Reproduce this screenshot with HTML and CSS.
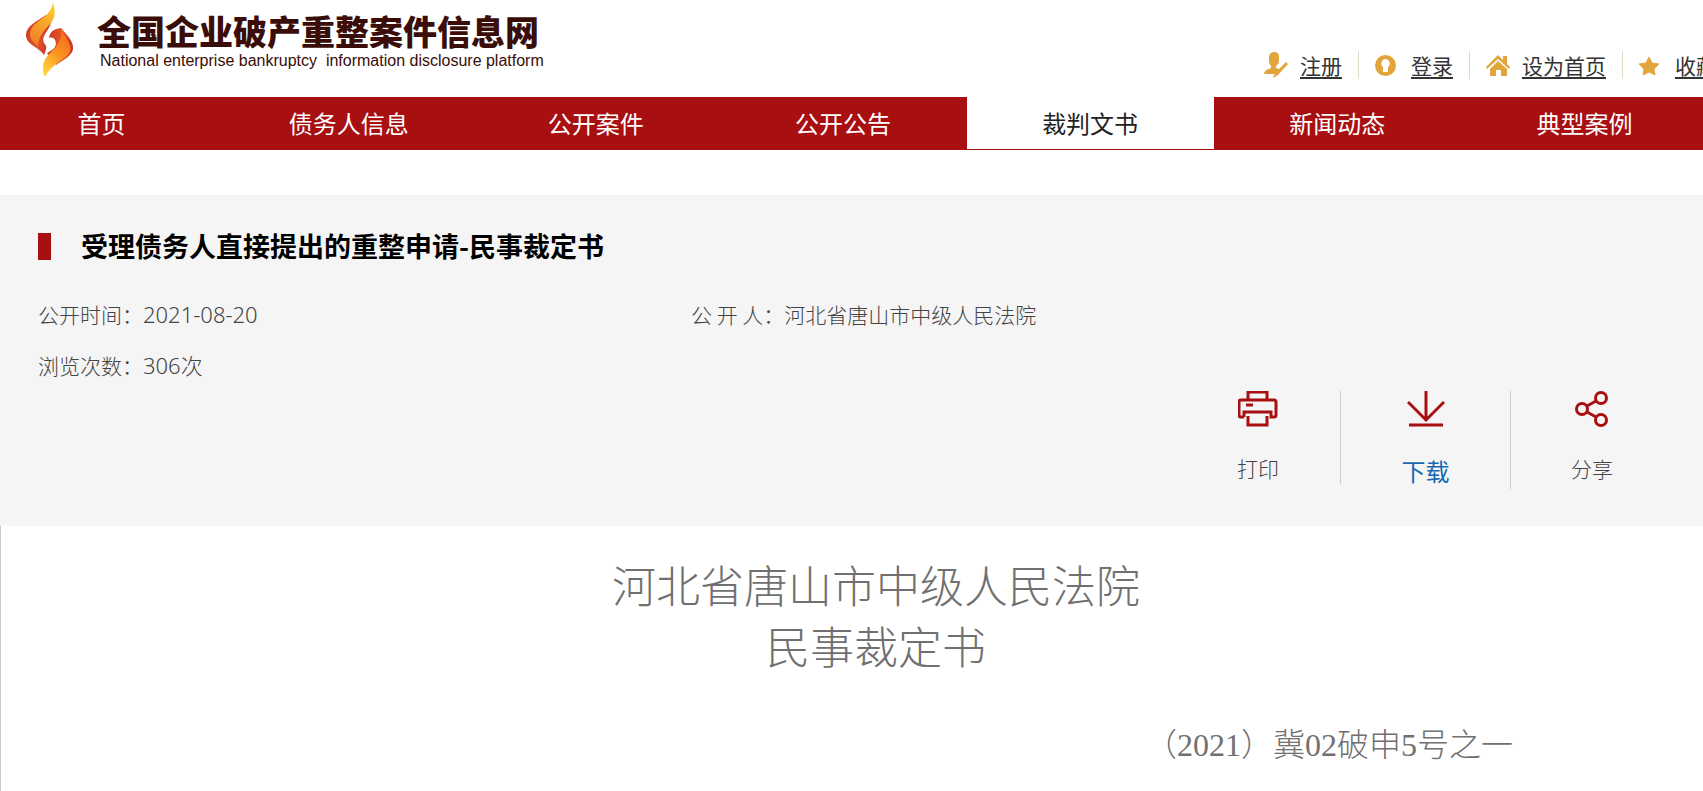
FILE: index.html
```html
<!DOCTYPE html>
<html lang="zh-CN">
<head>
<meta charset="utf-8">
<title>全国企业破产重整案件信息网</title>
<link rel="stylesheet" href="styles.css">
</head>
<body>
<header class="header">
  <a class="logo" href="#">
    <svg class="logo-mark" viewBox="0 0 48 74" aria-hidden="true">
      <defs>
        <linearGradient id="flameA" x1="0" y1="0.4" x2="1" y2="0.6">
          <stop offset="0" stop-color="#cf3a26"/><stop offset="0.5" stop-color="#e2542a"/><stop offset="1" stop-color="#c9302a"/>
        </linearGradient>
        <linearGradient id="flameB" x1="0.7" y1="0" x2="0.2" y2="1">
          <stop offset="0" stop-color="#fdcb28"/><stop offset="0.5" stop-color="#f7a12a"/><stop offset="1" stop-color="#f07a26"/>
        </linearGradient>
        <linearGradient id="flameC" x1="0.7" y1="0" x2="0.2" y2="1">
          <stop offset="0" stop-color="#f26a1c"/><stop offset="0.5" stop-color="#fb951f"/><stop offset="1" stop-color="#ffd93a"/>
        </linearGradient>
      </defs>
      <path fill="url(#flameA)" d="M20 12C11 18 0 23 0 32C0 42 13 44 18 52C20 47 22 44 18 40C15 33 22 29 25 20Z"/>
      <path fill="url(#flameB)" d="M27 0C30 8 29 15 25 20C19 27 13 31 12 43C2 37 2 28 8 22C15 16 25 11 27 0Z"/>
      <path fill="url(#flameA)" d="M35 25C40 31 48 38 47 46C46 53 38 56 30 62L21 50C27 47 32 43 29 37C28 35 26 34 23 35C24 28 28 26 35 25Z"/>
      <path fill="url(#flameC)" d="M35 25C37 31 47 42 44 49C41 56 26 60 19 74C16 68 16 61 20 55C25 48 37 42 35 25Z"/>
    </svg>
    <span class="logo-text">
      <span class="logo-cn">全国企业破产重整案件信息网</span>
      <span class="logo-en">National enterprise bankruptcy&nbsp; information disclosure platform</span>
    </span>
  </a>
  <ul class="links">
    <li><svg viewBox="0 0 24 26" aria-hidden="true"><path d="M5 4Q6 0 10 0Q15 0 15 5V9Q15 12 12 14V16L17 18L13 22H0Q0 18 7 16V14Q5 12 5 9Z"/><path d="M22 10L24 12L14 23L9 26L11 21Z"/></svg><a href="#">注册</a></li>
    <li><svg viewBox="0 0 24 26" aria-hidden="true"><path fill-rule="evenodd" d="M10.500 3A10.500 10.500 0 1 0 10.500 24A10.500 10.500 0 1 0 10.500 3ZM10.500 7A4.500 4.500 0 0 1 13 15V20H8V15A4.500 4.500 0 0 1 10.500 7Z"/></svg><a href="#">登录</a></li>
    <li><svg viewBox="0 0 24 26" aria-hidden="true"><path d="M12 3L17 8V4H21V12L24 15L23 17L12 7L1 17L0 15Z"/><path d="M12 9L21 17V24H15V18H10V24H4V17Z"/></svg><a href="#">设为首页</a></li>
    <li><svg viewBox="0 0 24 26" aria-hidden="true"><path stroke="#e2a53c" stroke-linejoin="round" d="M10 5L13 11L20 12L15 17L16 23L10 20L4 23L5 17L0 12L7 11Z"/></svg><a href="#">收藏</a></li>
  </ul>
</header>
<nav class="nav">
  <ul class="nav-list">
    <li><a href="#">首页</a></li>
    <li><a href="#">债务人信息</a></li>
    <li><a href="#">公开案件</a></li>
    <li><a href="#">公开公告</a></li>
    <li><a class="active" href="#">裁判文书</a></li>
    <li><a href="#">新闻动态</a></li>
    <li><a href="#">典型案例</a></li>
  </ul>
</nav>
<main>
  <section class="info">
    <h1 class="title">受理债务人直接提出的重整申请-民事裁定书</h1>
    <dl class="meta">
      <div><dt>公开时间：</dt><dd class="latin">2021-08-20</dd></div>
      <div><dt>公 开 人：</dt><dd>河北省唐山市中级人民法院</dd></div>
      <div><dt>浏览次数：</dt><dd class="latin">306次</dd></div>
    </dl>
    <div class="actions">
      <button class="action" type="button">
        <svg width="40" height="36" viewBox="0 0 40 36" aria-hidden="true"><path d="M10 9V1H29V9M6 26H3Q1 26 1 24V11Q1 9 3 9H36Q38 9 38 11V24Q38 26 36 26H33V21H6V26M8 14H15M10 25V34H29V25"/></svg>
        <span>打印</span>
      </button>
      <a class="action download" href="#">
        <svg width="38" height="36" viewBox="0 0 38 36" aria-hidden="true"><path d="M19 0V30M1 11L19 29L37 11M2 34H36"/></svg>
        <span>下载</span>
      </a>
      <button class="action" type="button">
        <svg width="34" height="36" viewBox="0 0 34 36" aria-hidden="true"><circle cx="7" cy="18" r="5.500"/><circle cx="26" cy="7" r="5.500"/><circle cx="26" cy="29" r="5.500"/><path d="M12 15L21 10M12 21L21 26"/></svg>
        <span>分享</span>
      </button>
    </div>
  </section>
  <article class="document">
    <h2>河北省唐山市中级人民法院<br>民事裁定书</h2>
    <p class="case-no">（2021）冀02破申5号之一</p>
  </article>
</main>
</body>
</html>
```
FILE: styles.css
```css
* { box-sizing: border-box; }
body {
  margin: 0;
  overflow-x: hidden;
  background: #fff;
  color: #444;
  font: 21px/32px "Noto Sans CJK SC", sans-serif;
}
ul, dl, dd, h1, h2, p { margin: 0; padding: 0; }
ul { list-style: none; }
a { color: inherit; text-decoration: none; }

.header { display: flex; justify-content: space-between; height: 97px; overflow: hidden; }
.logo { display: flex; gap: 23px; padding: 3px 0 0 26px; color: #3a0d08; white-space: nowrap; }
.logo-mark { width: 48px; height: 74px; }
.logo-text { display: flex; flex-direction: column; padding-top: 8px; }
.logo-cn { font-size: 34px; line-height: 40px; font-weight: 900; }
.logo-en { padding-left: 3px; font: 16px/20px "Liberation Sans", Arial, sans-serif; }

.links { display: flex; align-items: flex-start; margin: 51px -31px 0 0; color: #333; white-space: nowrap; }
.links li { display: flex; align-items: center; height: 28px; padding: 0 16px; border-right: 1px solid #dcdcc8; }
.links svg { width: 24px; height: 26px; margin-right: 12px; fill: #e2a53c; overflow: visible; }
.links a { line-height: 28px; text-decoration: underline; text-underline-offset: 3px; }

.nav { overflow: hidden; background: #a80f11; }
.nav-list { display: flex; margin: 0 -5px 0 -22px; }
.nav-list li { flex: 1; }
.nav-list a { display: block; height: 53px; border-bottom: 1px solid #a80f11; color: #fff; font-size: 24px; line-height: 52px; text-align: center; }
.nav-list .active { background: #fff; color: #222; }

.info { margin-top: 45px; padding: 31px 30px 37px 38px; background: #f5f5f5; }
.title { display: flex; align-items: center; gap: 30px; color: #000; font-size: 27px; line-height: 40px; }
.title::before { content: ""; width: 13px; height: 27px; background: #a80f11; }
.meta { display: grid; grid-template-columns: 653px 1fr; margin-top: 23px; line-height: 51px; font-weight: 300; }
.meta div { display: flex; }
.latin { font-family: "Noto Sans", "Noto Sans CJK SC", sans-serif; font-size: 22px; }
.actions { display: flex; justify-content: flex-end; align-items: flex-start; }
.action { display: flex; flex-direction: column; align-items: center; gap: 25px; width: 165px; padding: 0; border: 0; border-right: 1px solid #ccc; background: none; color: #444; font: inherit; font-weight: 300; }
.action:last-child { width: 162px; border-right: 0; }
.action svg { fill: none; stroke: #a80f11; stroke-width: 3px; }
.download { gap: 26px; width: 170px; color: #1768b3; font-size: 24px; line-height: 36px; font-weight: 400; }

.document { padding: 32px 0 30px 48px; border-left: 1px solid #ccc; color: #707070; font-family: "Liberation Serif", "Noto Sans CJK SC", serif; font-weight: 300; }
.document h2 { font-size: 44px; line-height: 61px; font-weight: 300; text-align: center; }
.case-no { margin-top: 43px; padding-right: 190px; font-size: 32px; line-height: 44px; text-align: right; }
```
